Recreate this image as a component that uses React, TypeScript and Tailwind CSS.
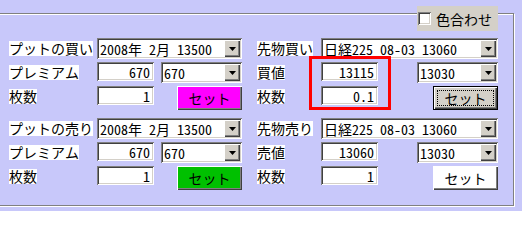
import React from "react";

const SUNKEN =
  "shadow-[inset_1px_1px_0_#808080,inset_-1px_-1px_0_#ffffff,inset_2px_2px_0_#404040,inset_-2px_-2px_0_#d4d0c8]";
const RAISED =
  "shadow-[inset_1px_1px_0_#ffffff,inset_-1px_-1px_0_#404040,inset_-2px_-2px_0_#808080]";

function Label({ text }: { text: string }) {
  return <span className="bg-white leading-[15px] whitespace-nowrap inline-block">{text}</span>;
}

function TextBox({ value, className }: { value: string; className: string }) {
  return (
    <div className={`${SUNKEN} ${className} bg-white h-[19px] flex items-center justify-end pr-[4px] leading-none shrink-0`}>
      {value}
    </div>
  );
}

function Arrow() {
  return (
    <div className={`${RAISED} bg-[#d4d0c8] w-[16px] h-full flex items-center justify-center`}>
      <svg width="7" height="4" viewBox="0 0 7 4">
        <polygon points="0,0 7,0 3.5,4" fill="#000" />
      </svg>
    </div>
  );
}

function Combo({ value, className }: { value: string; className: string }) {
  return (
    <div className={`${SUNKEN} ${className} bg-white h-[21px] p-[2px] flex shrink-0`}>
      <div className="flex-1 flex items-center pl-[1px] leading-none whitespace-nowrap overflow-hidden">{value}</div>
      <Arrow />
    </div>
  );
}

function Btn({ className, face }: { className: string; face: string }) {
  return (
    <div className={`${RAISED} ${face} ${className} w-[65px] h-[24px] flex items-center justify-center leading-none shrink-0`}>
      セット
    </div>
  );
}

function DefaultBtn({ className }: { className: string }) {
  return (
    <div className={`${className} w-[65px] h-[24px] border border-black shrink-0`}>
      <div className={`${RAISED} bg-[#d4d0c8] w-full h-full p-[3px]`}>
        <div className="w-full h-full border border-dotted border-black flex items-center justify-center leading-none">
          セット
        </div>
      </div>
    </div>
  );
}

export default function App() {
  return (
    <div className="w-[522px] h-[211px] bg-[#c8c8fa] relative overflow-hidden text-[14px] text-black font-['Noto_Sans_Mono_CJK_JP','Noto_Sans_CJK_JP',sans-serif]">
      <div className="mt-[13px] ml-[-3px] w-[517px] h-[193px] border border-[#808080] shadow-[1px_1px_0_#ffffff,inset_1px_1px_0_#ffffff] pt-[24px] pl-[11px] flex">
        {/* left column */}
        <div className="w-[248px] flex flex-col">
          <div className="h-[24px] flex">
            <div className="w-[88px]"><Label text="プットの買い" /></div>
            <Combo value="2008年 2月 13500" className="w-[145px]" />
          </div>
          <div className="h-[24px] flex">
            <div className="w-[88px]"><Label text="プレミアム" /></div>
            <TextBox value="670" className="w-[57px]" />
            <Combo value="670" className="w-[81px] ml-[7px]" />
          </div>
          <div className="h-[32px] flex">
            <div className="w-[88px]"><Label text="枚数" /></div>
            <TextBox value="1" className="w-[57px]" />
            <Btn className="ml-[23px]" face="bg-[#ff00ff]" />
          </div>
          <div className="h-[24px] flex">
            <div className="w-[88px]"><Label text="プットの売り" /></div>
            <Combo value="2008年 2月 13500" className="w-[145px]" />
          </div>
          <div className="h-[24px] flex">
            <div className="w-[88px]"><Label text="プレミアム" /></div>
            <TextBox value="670" className="w-[57px]" />
            <Combo value="670" className="w-[81px] ml-[7px]" />
          </div>
          <div className="h-[24px] flex">
            <div className="w-[88px]"><Label text="枚数" /></div>
            <TextBox value="1" className="w-[57px]" />
            <Btn className="ml-[23px]" face="bg-[#00c000]" />
          </div>
        </div>
        {/* right column */}
        <div className="w-[250px] flex flex-col">
          <div className="h-[24px] flex">
            <div className="w-[64px]"><Label text="先物買い" /></div>
            <Combo value="日経225 08-03 13060" className="w-[177px]" />
          </div>
          <div className="h-[24px] flex">
            <div className="w-[64px]"><Label text="買値" /></div>
            <TextBox value="13115" className="w-[57px]" />
            <Combo value="13030" className="w-[81px] ml-[39px]" />
          </div>
          <div className="h-[32px] flex">
            <div className="w-[64px]"><Label text="枚数" /></div>
            <TextBox value="0.1" className="w-[57px]" />
            <DefaultBtn className="ml-[55px]" />
          </div>
          <div className="h-[24px] flex">
            <div className="w-[64px]"><Label text="先物売り" /></div>
            <Combo value="日経225 08-03 13060" className="w-[177px]" />
          </div>
          <div className="h-[24px] flex">
            <div className="w-[64px]"><Label text="売値" /></div>
            <TextBox value="13060" className="w-[57px]" />
            <Combo value="13030" className="w-[81px] ml-[39px]" />
          </div>
          <div className="h-[24px] flex">
            <div className="w-[64px]"><Label text="枚数" /></div>
            <TextBox value="1" className="w-[57px]" />
            <Btn className="ml-[55px]" face="bg-white" />
          </div>
        </div>
      </div>

      {/* 色合わせ checkbox over the frame line */}
      <div className="absolute left-[417px] top-[6px] w-[81px] h-[25px] bg-[#d4d0c8] flex items-center">
        <div className={`${SUNKEN} bg-white w-[13px] h-[13px] ml-[1px]`} />
        <span className="ml-[5px] leading-none">色合わせ</span>
      </div>

      {/* red highlight annotation */}
      <div className="absolute left-[309px] top-[56px] w-[82px] h-[54px] border-[3px] border-[#ff0000]" />
    </div>
  );
}
